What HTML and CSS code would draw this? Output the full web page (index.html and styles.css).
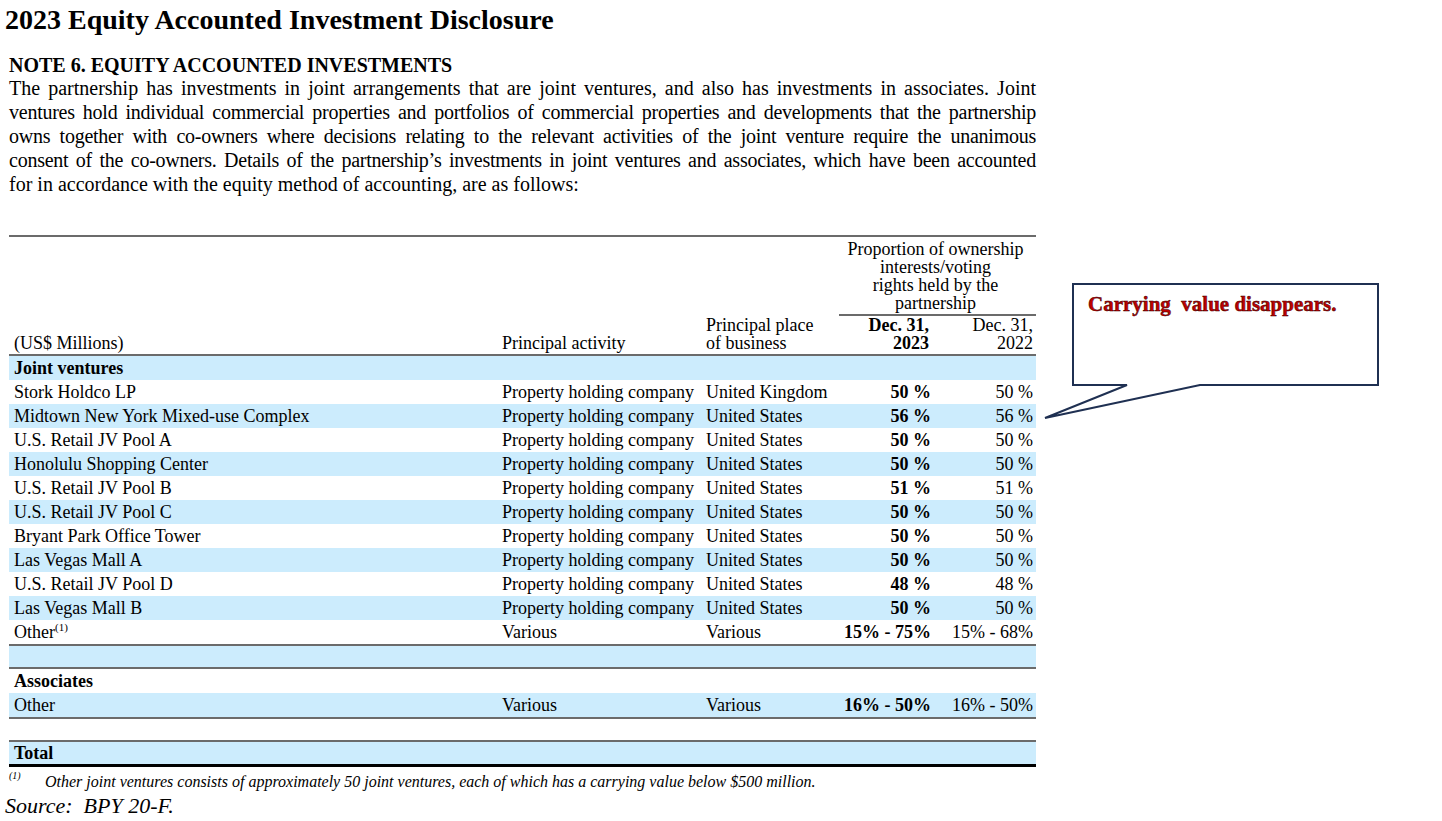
FILE: index.html
```html
<!DOCTYPE html>
<html lang="en">
<head>
<meta charset="utf-8">
<title>2023 Equity Accounted Investment Disclosure</title>
<link rel="stylesheet" href="styles.css">
</head>
<body>
<h1 class="title">2023 Equity Accounted Investment Disclosure</h1>
<section class="note">
  <h2 class="note-head">NOTE 6. EQUITY ACCOUNTED INVESTMENTS</h2>
  <p class="para">
    <span class="line">The partnership has investments in joint arrangements that are joint ventures, and also has investments in associates. Joint</span>
    <span class="line cond">ventures hold individual commercial properties and portfolios of commercial properties and developments that the partnership</span>
    <span class="line cond">owns together with co-owners where decisions relating to the relevant activities of the joint venture require the unanimous</span>
    <span class="line cond">consent of the co-owners. Details of the partnership’s investments in joint ventures and associates, which have been accounted</span>
    <span class="line last">for in accordance with the equity method of accounting, are as follows:</span>
  </p>
</section>

<table class="eq">
  <colgroup>
    <col class="c1"><col class="c2"><col class="c3"><col class="c4"><col class="c5">
  </colgroup>
  <thead>
    <tr class="h1">
      <th rowspan="2" class="l">(US$ Millions)</th>
      <th rowspan="2" class="l">Principal activity</th>
      <th rowspan="2" class="l place">Principal place<br>of business</th>
      <th colspan="2" class="prop">Proportion of ownership<br>interests/voting<br>rights held by the<br>partnership</th>
    </tr>
    <tr class="h2">
      <th class="r b y23">Dec. 31,<br>2023</th>
      <th class="r n">Dec. 31,<br>2022</th>
    </tr>
  </thead>
  <tbody>
    <tr class="blue"><td class="b">Joint ventures</td><td></td><td></td><td></td><td></td></tr>
    <tr><td>Stork Holdco LP</td><td>Property holding company</td><td>United Kingdom</td><td class="r b">50 %</td><td class="r">50 %</td></tr>
    <tr class="blue"><td>Midtown New York Mixed-use Complex</td><td>Property holding company</td><td>United States</td><td class="r b">56 %</td><td class="r">56 %</td></tr>
    <tr><td>U.S. Retail JV Pool A</td><td>Property holding company</td><td>United States</td><td class="r b">50 %</td><td class="r">50 %</td></tr>
    <tr class="blue"><td>Honolulu Shopping Center</td><td>Property holding company</td><td>United States</td><td class="r b">50 %</td><td class="r">50 %</td></tr>
    <tr><td>U.S. Retail JV Pool B</td><td>Property holding company</td><td>United States</td><td class="r b">51 %</td><td class="r">51 %</td></tr>
    <tr class="blue"><td>U.S. Retail JV Pool C</td><td>Property holding company</td><td>United States</td><td class="r b">50 %</td><td class="r">50 %</td></tr>
    <tr><td>Bryant Park Office Tower</td><td>Property holding company</td><td>United States</td><td class="r b">50 %</td><td class="r">50 %</td></tr>
    <tr class="blue"><td>Las Vegas Mall A</td><td>Property holding company</td><td>United States</td><td class="r b">50 %</td><td class="r">50 %</td></tr>
    <tr><td>U.S. Retail JV Pool D</td><td>Property holding company</td><td>United States</td><td class="r b">48 %</td><td class="r">48 %</td></tr>
    <tr class="blue"><td>Las Vegas Mall B</td><td>Property holding company</td><td>United States</td><td class="r b">50 %</td><td class="r">50 %</td></tr>
    <tr class="rule-below"><td>Other<sup>(1)</sup></td><td>Various</td><td>Various</td><td class="r b">15% - 75%</td><td class="r">15% - 68%</td></tr>
    <tr class="blue rule-below spacer"><td></td><td></td><td></td><td></td><td></td></tr>
    <tr><td class="b">Associates</td><td></td><td></td><td></td><td></td></tr>
    <tr class="blue rule-below"><td>Other</td><td>Various</td><td>Various</td><td class="r b">16% - 50%</td><td class="r">16% - 50%</td></tr>
    <tr class="rule-below spacer"><td></td><td></td><td></td><td></td><td></td></tr>
    <tr class="blue total"><td class="b">Total</td><td></td><td></td><td></td><td></td></tr>
  </tbody>
</table>
<p class="foot"><sup class="fn">(1)</sup><span>Other joint ventures consists of approximately 50 joint ventures, each of which has a carrying value below $500 million.</span></p>
<p class="source">Source:&nbsp; BPY 20-F.</p>

<div class="callout">
  <svg class="callout-shape" width="360" height="150" viewBox="0 0 360 150" aria-hidden="true">
    <path d="M33 10 H338 V111 H160 L5 144 L87 111 H33 Z" fill="#fff" stroke="#1f3052" stroke-width="2" stroke-linejoin="miter"/>
  </svg>
  <p class="callout-text">Carrying&nbsp; value disappears.</p>
</div>
</body>
</html>
```
FILE: styles.css
```css
html, body {
  margin: 0;
  padding: 0;
  background: #fff;
}
body {
  font-family: "Liberation Serif", "Times New Roman", serif;
  color: #000;
  position: relative;
  width: 1442px;
  height: 821px;
  overflow: hidden;
}
.title {
  margin: 0;
  padding: 4px 0 0 5px;
  font-size: 28px;
  line-height: 31px;
  font-weight: bold;
}
.note {
  padding: 19px 0 0 9px;
  width: 1027px;
}
.note-head {
  margin: 0;
  font-size: 20px;
  line-height: 22px;
  font-weight: bold;
}
.para {
  margin: 0;
  font-size: 20px;
  line-height: 24px;
}
.line {
  display: block;
  white-space: nowrap;
  text-align: justify;
  text-align-last: justify;
}
.line.cond {
  letter-spacing: -0.25px;
}
.line.last {
  text-align-last: left;
}
.eq {
  margin: 39px 0 0 9px;
  width: 1027px;
  border-collapse: collapse;
  font-size: 18px;
  table-layout: fixed;
  border-top: 2px solid #6b6b6b;
}
.c1 { width: 488px; }
.c2 { width: 207px; }
.c3 { width: 135px; }
.c4 { width: 94px; }
.c5 { width: 103px; }
.eq th {
  font-weight: normal;
  vertical-align: bottom;
  line-height: 18px;
  padding: 0 3px 2px 5px;
}
.eq th.l { text-align: left; }
.eq th.b { font-weight: bold; }
.eq th.y23 { padding-right: 4px; }
.eq .h1 th.prop {
  text-align: center;
  vertical-align: top;
  padding: 3px 4px 2px 0;
  border-bottom: 2px solid #6b6b6b;
}
.eq .h1 th.place { padding-left: 2px; }
.eq thead { border-bottom: 2px solid #6b6b6b; }
.eq td {
  height: 24px;
  padding: 0 3px 0 5px;
  line-height: 24px;
  white-space: nowrap;
  vertical-align: middle;
}
.eq td:nth-child(3) { padding-left: 2px; }
.eq td:nth-child(4) { padding-right: 2px; }
.eq .r { text-align: right; }
.eq .b { font-weight: bold; }
.eq tr.blue td { background: #ccecfd; }
.eq tr.rule-below td { border-bottom: 2px solid #6b6b6b; }
.eq tr.spacer td { height: 21px; }
.eq tr.total td {
  height: 22px;
  line-height: 22px;
  border-bottom: 3px solid #000;
}
.eq sup {
  font-size: 11px;
  line-height: 0;
  vertical-align: 7px;
}
.foot {
  margin: 5px 0 0 9px;
  font-size: 16px;
  font-style: italic;
  line-height: 20px;
  display: flex;
}
.foot .fn {
  width: 36px;
  font-size: 10px;
  line-height: 0;
  vertical-align: 0;
  position: relative;
  top: 4px;
}
.source {
  margin: 2px 0 0 5px;
  font-size: 22px;
  font-style: italic;
  line-height: 24px;
}
.callout {
  position: absolute;
  left: 1040px;
  top: 274px;
  width: 360px;
  height: 150px;
}
.callout-shape {
  position: absolute;
  left: 0;
  top: 0;
}
.callout-text {
  position: absolute;
  left: 48px;
  top: 18px;
  margin: 0;
  font-size: 21px;
  font-weight: bold;
  color: #c00000;
  -webkit-text-stroke: 0.5px #3a0000;
  white-space: nowrap;
}
```
